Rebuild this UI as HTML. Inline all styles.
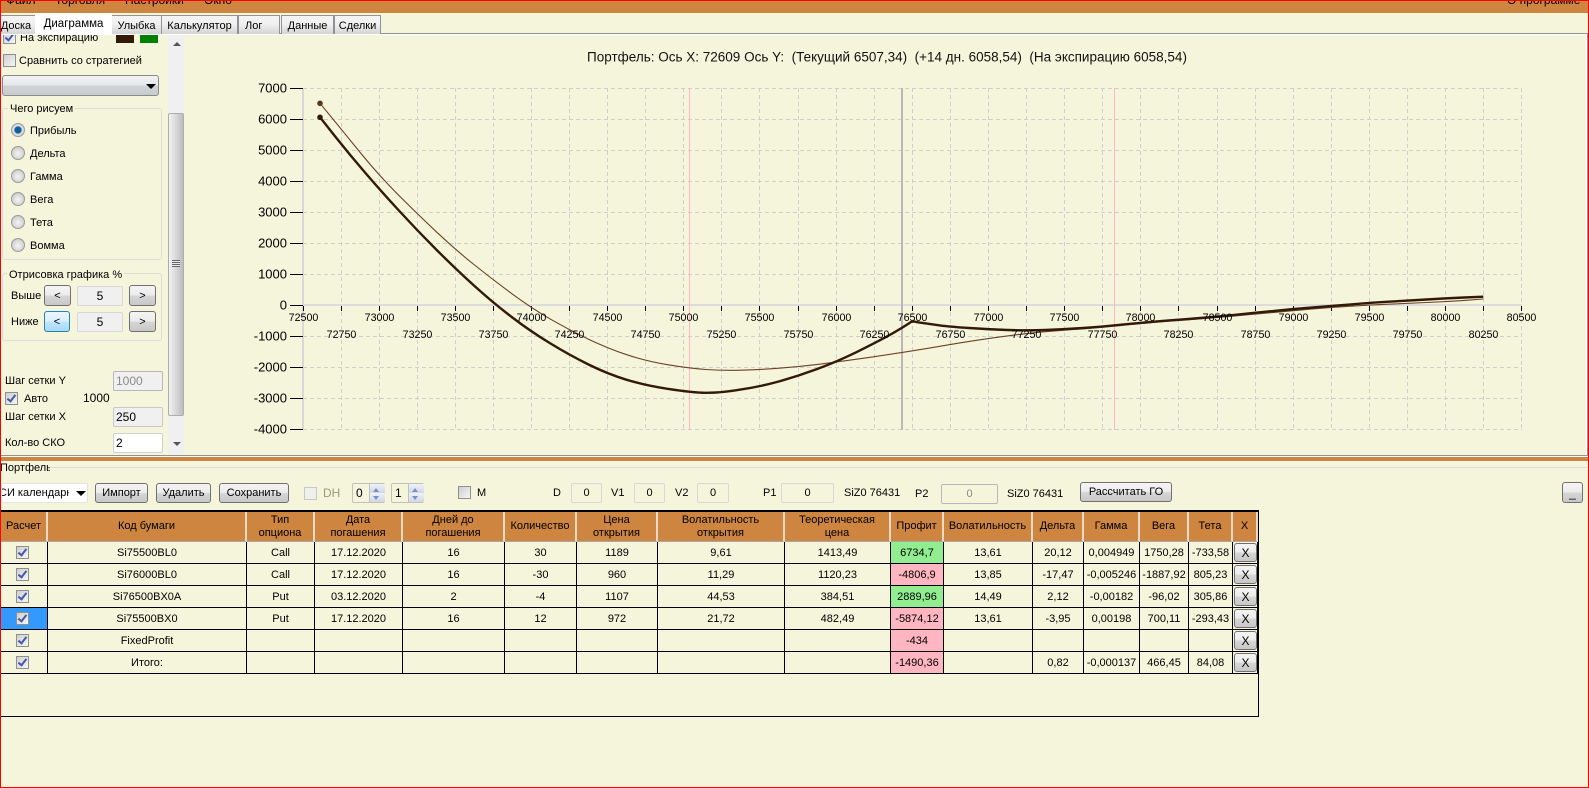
<!DOCTYPE html>
<html lang="ru"><head><meta charset="utf-8"><title>Портфель</title>
<style>
html,body{margin:0;padding:0;width:1589px;height:788px;overflow:hidden;background:#F5F5DC}
body{position:relative;font:11px/14px "Liberation Sans",sans-serif;color:#000}
.a{position:absolute;white-space:nowrap;line-height:14px}
.red{position:absolute;background:#f00;z-index:50}
.tab{position:absolute;top:15px;height:18px;border:1px solid #8f9296;border-bottom:0;box-sizing:content-box;background:linear-gradient(#f4f4f4,#f0f0f0 45%,#d4d4d4);text-align:center;line-height:20px;font-size:11px;overflow:hidden}
.cb{position:absolute;width:11px;height:11px;border:1px solid #8e8f8f;background:linear-gradient(135deg,#cfcfcf,#f6f6f6)}
.cb.on::after{content:"";position:absolute;left:3px;top:0;width:3px;height:7px;border:solid #4359ab;border-width:0 2px 2px 0;transform:rotate(38deg)}
.rd{position:absolute;left:10px;width:12px;height:12px;border:1px solid #9a9a9a;border-radius:50%;background:radial-gradient(circle at 50% 55%,#f4f4f4,#d8d8d8 55%,#b8b8b8)}
.rd.on{background:radial-gradient(circle,#0a5f9e 0,#14609a 36%,#dfe3e6 50%,#c4c4c4 100%)}
.btn{position:absolute;box-sizing:border-box;border:1px solid #707070;border-radius:3px;background:linear-gradient(#f4f4f4,#ececec 48%,#d6d6d6 52%,#c8c8c8);text-align:center;font-size:11px}
.in{position:absolute;box-sizing:border-box;border:1px solid #d6d8da;border-radius:2px;background:#f0f0f0;text-align:center;font-size:12px}
.grp{position:absolute;box-sizing:border-box;border:1px solid #dcdcdc;border-radius:3px}
.lg{position:absolute;background:#F5F5DC;padding:0 2px;white-space:nowrap;line-height:14px;font-size:11px}
#tw{position:absolute;left:1px;top:510px;width:1258px;height:207px;box-sizing:border-box;border-top:2px solid #000;border-bottom:1px solid #000;border-right:1px solid #000;overflow:hidden}
table{border-collapse:separate;border-spacing:0;table-layout:fixed;width:1257px;position:absolute;left:0;top:0;font-size:11px}
th{height:30px;box-sizing:border-box;padding:0;background:#CD853F;font-weight:normal;line-height:13px;border-right:2px solid #ead9c5;border-bottom:1px solid #a9a9a9;overflow:hidden;white-space:pre-line}
td{height:22px;box-sizing:border-box;padding:0;text-align:center;border-right:1px solid #000;border-bottom:1px solid #000;position:relative;overflow:hidden;white-space:nowrap}
td .cb{left:15px;top:4px}
.g{background:#90EE90}.p{background:#FFB6C1}.s{background:#3399ff}
td .x{position:absolute;left:1px;top:1px;width:23px;height:19px;box-sizing:border-box;border:1px solid #707070;border-radius:3px;background:linear-gradient(#f4f4f4,#ececec 48%,#d6d6d6 52%,#c8c8c8);line-height:18px;font-size:12px}
svg{position:absolute;left:0;top:0}
</style></head><body>
<div class="red" style="left:0;top:0;width:1589px;height:1px"></div>
<div class="red" style="left:0;top:787px;width:1589px;height:1px"></div>
<div class="red" style="left:0;top:0;width:1px;height:788px"></div>
<div class="red" style="left:1588px;top:0;width:1px;height:788px"></div>

<div style="position:absolute;left:0;top:1px;width:1589px;height:12px;background:#CD853F;overflow:hidden;font-size:12px">
<span class="a" style="left:6px;top:-8px">Файл</span>
<span class="a" style="left:55px;top:-8px">Торговля</span>
<span class="a" style="left:125px;top:-8px">Настройки</span>
<span class="a" style="left:204px;top:-8px">Окно</span>
<span class="a" style="left:1507px;top:-8px">О программе</span>
</div>

<!-- tab strip -->
<div style="position:absolute;left:1px;top:33px;width:1586px;height:1px;background:#8f9296"></div>
<div style="position:absolute;left:1px;top:34px;width:1586px;height:1px;background:#fff"></div>
<div style="position:absolute;left:1586px;top:34px;width:1px;height:421px;background:#fff"></div>
<div style="position:absolute;left:1587px;top:33px;width:1px;height:423px;background:#8f9296"></div>
<div class="tab" style="left:-3px;width:37px;text-indent:-1px">Доска</div>
<div class="tab" style="left:35px;top:13px;width:75px;height:21px;background:#fff;border-color:#fff;line-height:20px;z-index:2;font-size:11.5px">Диаграмма</div>
<div class="tab" style="left:111px;width:49px">Улыбка</div>
<div class="tab" style="left:161px;width:75px">Калькулятор</div>
<div class="tab" style="left:238px;width:40px;text-align:left;text-indent:6px">Лог</div>
<div class="tab" style="left:281px;width:51px">Данные</div>
<div class="tab" style="left:334px;width:45px">Сделки</div>

<!-- left panel -->
<div style="position:absolute;left:1px;top:35px;width:166px;height:419px;overflow:hidden">
<div class="cb on" style="left:2px;top:-4px"></div>
<span class="a" style="left:19px;top:-4px">На экспирацию</span>
<div style="position:absolute;left:115px;top:0;width:18px;height:8px;background:#331a06"></div>
<div style="position:absolute;left:139px;top:0;width:18px;height:8px;background:#008000"></div>
<div class="cb" style="left:2px;top:19px"></div>
<span class="a" style="left:18px;top:19px">Сравнить со стратегией</span>
<div class="btn" style="left:1px;top:40px;width:157px;height:21px;background:linear-gradient(#f2f2f2,#e6e8ea 48%,#d0d4d6 52%,#c8ccce);border-color:#8a8a8a"></div>
<div style="position:absolute;left:145px;top:49px;border:5px solid transparent;border-top:5px solid #000;border-bottom:0"></div>
<div class="grp" style="left:1px;top:73px;width:160px;height:152px"></div>
<span class="lg" style="left:7px;top:67px">Чего рисуем</span>
<div class="rd on" style="top:88px"></div><span class="a" style="left:29px;top:89px">Прибыль</span>
<div class="rd" style="top:111px"></div><span class="a" style="left:29px;top:112px">Дельта</span>
<div class="rd" style="top:134px"></div><span class="a" style="left:29px;top:135px">Гамма</span>
<div class="rd" style="top:157px"></div><span class="a" style="left:29px;top:158px">Вега</span>
<div class="rd" style="top:180px"></div><span class="a" style="left:29px;top:181px">Тета</span>
<div class="rd" style="top:203px"></div><span class="a" style="left:29px;top:204px">Вомма</span>
<div class="grp" style="left:1px;top:238px;width:160px;height:68px"></div>
<span class="lg" style="left:6px;top:233px">Отрисовка графика %</span>
<span class="a" style="left:10px;top:254px">Выше</span>
<div class="btn" style="left:43px;top:250px;width:27px;height:21px;line-height:20px">&lt;</div>
<div class="in" style="left:76px;top:251px;width:46px;height:20px;line-height:18px">5</div>
<div class="btn" style="left:128px;top:250px;width:27px;height:21px;line-height:20px">&gt;</div>
<span class="a" style="left:10px;top:280px">Ниже</span>
<div class="btn" style="left:43px;top:276px;width:26px;height:21px;line-height:20px;border-color:#2c7fb8;background:linear-gradient(#eaf6fd,#d9f0fc 48%,#bee6fd 52%,#a7d9f5)">&lt;</div>
<div class="in" style="left:76px;top:277px;width:46px;height:20px;line-height:18px">5</div>
<div class="btn" style="left:128px;top:276px;width:27px;height:21px;line-height:20px">&gt;</div>
<span class="a" style="left:4px;top:339px">Шаг сетки Y</span>
<div class="in" style="left:112px;top:336px;width:50px;height:20px;line-height:18px;text-align:left;padding-left:2px;color:#8a8a8a;border-color:#b8b8b8">1000</div>
<div class="cb on" style="left:4px;top:357px"></div>
<span class="a" style="left:23px;top:357px">Авто</span>
<span class="a" style="left:82px;top:356px;font-size:12px">1000</span>
<span class="a" style="left:4px;top:375px">Шаг сетки X</span>
<div class="in" style="left:112px;top:372px;width:50px;height:20px;line-height:18px;text-align:left;padding-left:2px;border-color:#c8c8c8">250</div>
<span class="a" style="left:4px;top:401px">Кол-во СКО</span>
<div class="in" style="left:112px;top:398px;width:50px;height:20px;line-height:18px;text-align:left;padding-left:2px;background:#fff;border-color:#d0d0d0">2</div>
</div>

<!-- scrollbar -->
<div style="position:absolute;left:168px;top:35px;width:16px;height:419px;background:#f0f0f0"></div>
<div style="position:absolute;left:173px;top:42px;border:4px solid transparent;border-bottom:4px solid #555;border-top:0"></div>
<div style="position:absolute;left:173px;top:442px;border:4px solid transparent;border-top:4px solid #555;border-bottom:0"></div>
<div style="position:absolute;left:168px;top:113px;width:16px;height:303px;box-sizing:border-box;border:1px solid #adadad;border-radius:2px;background:linear-gradient(90deg,#f2f2f2,#d8d8d8 50%,#bcbcbc)"></div>
<div style="position:absolute;left:172px;top:260px;width:8px;height:7px;background:repeating-linear-gradient(#666 0,#666 1px,#e8e8e8 1px,#e8e8e8 2px)"></div>

<!-- chart -->
<svg width="1589" height="460" viewBox="0 0 1589 460" font-family="'Liberation Sans',sans-serif">
<text x="887" y="61.5" font-size="13.5" text-anchor="middle" xml:space="preserve" fill="#111">Портфель: Ось X: 72609 Ось Y:  (Текущий 6507,34)  (+14 дн. 6058,54)  (На экспирацию 6058,54)</text>
<path stroke="#cfcfcf" stroke-width="1" stroke-dasharray="4 3" fill="none" d="M303 88.5H1522M303 119.5H1522M303 150.5H1522M303 181.5H1522M303 212.5H1522M303 243.5H1522M303 274.5H1522M303 336.5H1522M303 367.5H1522M303 398.5H1522M303 429.5H1522
M341.5 88V430M379.5 88V430M417.5 88V430M455.5 88V430M493.5 88V430M531.5 88V430M569.5 88V430M607.5 88V430M645.5 88V430M683.5 88V430M721.5 88V430M759.5 88V430M798.5 88V430M836.5 88V430M874.5 88V430M912.5 88V430M950.5 88V430M988.5 88V430M1026.5 88V430M1064.5 88V430M1102.5 88V430M1140.5 88V430M1178.5 88V430M1217.5 88V430M1255.5 88V430M1293.5 88V430M1331.5 88V430M1369.5 88V430M1407.5 88V430M1445.5 88V430M1483.5 88V430M1521.5 88V430"/>
<rect x="302" y="88" width="2" height="342" fill="#d8d8d8"/>
<rect x="303" y="304" width="1219" height="2" fill="#dcdcdc"/>
<rect x="901" y="88" width="2" height="342" fill="#b8b8b8"/>
<rect x="689" y="88" width="1" height="342" fill="#ffb6c1"/>
<rect x="1114" y="88" width="1" height="342" fill="#ffb6c1"/>
<path stroke="#000" stroke-width="1" fill="none" d="M290 88.5H303M290 119.5H303M290 150.5H303M290 181.5H303M290 212.5H303M290 243.5H303M290 274.5H303M290 305.5H303M290 336.5H303M290 367.5H303M290 398.5H303M290 429.5H303
M303.5 306V311M341.5 306V311M379.5 306V311M417.5 306V311M455.5 306V311M493.5 306V311M531.5 306V311M569.5 306V311M607.5 306V311M645.5 306V311M683.5 306V311M721.5 306V311M759.5 306V311M798.5 306V311M836.5 306V311M874.5 306V311M912.5 306V311M950.5 306V311M988.5 306V311M1026.5 306V311M1064.5 306V311M1102.5 306V311M1140.5 306V311M1178.5 306V311M1217.5 306V311M1255.5 306V311M1293.5 306V311M1331.5 306V311M1369.5 306V311M1407.5 306V311M1445.5 306V311M1483.5 306V311M1521.5 306V311"/>
<path fill="none" stroke="#6b4226" stroke-width="1.1" stroke-linejoin="round" d="M320 103.3L341.3 129.3L360.6 153Q380 176.7 398.4 195Q416.7 213.3 436.2 231.7Q455.7 250 474.5 265Q493.3 280 512.5 294.2Q531.7 308.3 550.5 319.2Q569.3 330 588.5 339.2Q607.7 348.3 626.7 354.7Q645.7 361 667.5 364.7Q689.3 368.3 705.8 369.5Q722.3 370.7 741.2 370.2Q760 369.7 779.2 368.2Q798.3 366.7 817.5 364.4Q836.7 362 869.2 357.4Q901.7 352.7 939.2 346.4Q976.7 340 1001.7 336.7Q1026.7 333.3 1045.4 331.7Q1064 330 1083.4 328.8Q1102.7 327.5 1121.4 325.5Q1140 323.5 1179 320.5Q1218 317.5 1236.5 315.8Q1255 314 1274.2 312.4Q1293.3 310.7 1312.5 309Q1331.7 307.3 1350.9 306.2Q1370 305 1388.7 304.2Q1407.3 303.3 1426.5 302.5Q1445.7 301.7 1464.5 300.4L1483.3 299"/>
<path fill="none" stroke="#331a08" stroke-width="2.4" stroke-linejoin="round" d="M320 117.3L335 136.2Q350 155 365 172.5Q380 190 398.4 210Q416.7 230 436.2 249.5Q455.7 269 474.5 286Q493.3 303 511.7 317Q530 331 549.7 343Q569.3 355 588.5 364.5Q607.7 374 626.7 379.8Q645.7 385.5 667.5 388.8C680 390.7 694 392.8 706 392.8C720 392.8 731 391.2 741.2 389.4Q760 386.7 779.2 381.4Q798.3 376 817.5 368.9Q836.7 361.7 855.9 352.4Q875 343 888.4 335.7Q901.7 328.3 911 322L914 321.5L918 322.3Q930 324 940 325.4Q950 326.7 969 328Q988 329.3 1007.4 330Q1026.7 330.7 1045.4 330Q1064 329.3 1083.4 328Q1102.7 326.7 1121.4 324.7Q1140 322.7 1179 319.7Q1218 316.7 1236.5 314.7Q1255 312.7 1274.2 310.9Q1293.3 309 1312.5 307.5Q1331.7 306 1350.9 304.4Q1370 302.7 1388.7 301.7Q1407.3 300.7 1426.5 299.5Q1445.7 298.3 1464.5 297.5L1483.3 296.7"/>
<circle cx="320" cy="103.3" r="2.8" fill="#5f3518"/>
<circle cx="320" cy="117.3" r="2.8" fill="#331a08"/>
<g font-size="13" text-anchor="end" fill="#000">
<text x="287" y="92.5">7000</text><text x="287" y="123.5">6000</text><text x="287" y="154.5">5000</text><text x="287" y="185.5">4000</text><text x="287" y="216.5">3000</text><text x="287" y="247.5">2000</text><text x="287" y="278.5">1000</text><text x="287" y="309.5">0</text><text x="287" y="340.5">-1000</text><text x="287" y="371.5">-2000</text><text x="287" y="402.5">-3000</text><text x="287" y="433.5">-4000</text>
</g>
<g font-size="10.7" text-anchor="middle" fill="#000">
<text x="303.5" y="321">72500</text><text x="379.5" y="321">73000</text><text x="455.5" y="321">73500</text><text x="531.5" y="321">74000</text><text x="607.5" y="321">74500</text><text x="683.5" y="321">75000</text><text x="759.5" y="321">75500</text><text x="836.5" y="321">76000</text><text x="912.5" y="321">76500</text><text x="988.5" y="321">77000</text><text x="1064.5" y="321">77500</text><text x="1140.5" y="321">78000</text><text x="1217.5" y="321">78500</text><text x="1293.5" y="321">79000</text><text x="1369.5" y="321">79500</text><text x="1445.5" y="321">80000</text><text x="1521.5" y="321">80500</text>
<text x="341.5" y="338">72750</text><text x="417.5" y="338">73250</text><text x="493.5" y="338">73750</text><text x="569.5" y="338">74250</text><text x="645.5" y="338">74750</text><text x="721.5" y="338">75250</text><text x="798.5" y="338">75750</text><text x="874.5" y="338">76250</text><text x="950.5" y="338">76750</text><text x="1026.5" y="338">77250</text><text x="1102.5" y="338">77750</text><text x="1178.5" y="338">78250</text><text x="1255.5" y="338">78750</text><text x="1331.5" y="338">79250</text><text x="1407.5" y="338">79750</text><text x="1483.5" y="338">80250</text>
</g>
</svg>

<!-- splitter -->
<div style="position:absolute;left:1px;top:455px;width:1587px;height:1px;background:#8f9296"></div>
<div style="position:absolute;left:1px;top:456px;width:1587px;height:1px;background:#fff"></div>
<div style="position:absolute;left:1px;top:457px;width:1587px;height:4px;background:#CD853F"></div>

<!-- portfolio toolbar -->
<div style="position:absolute;left:50px;top:467px;width:1537px;height:1px;background:#dcdcdc"></div>
<span class="a" style="left:0;top:461px;width:50px;overflow:hidden">Портфель</span>
<div style="position:absolute;left:1px;top:483px;width:87px;height:20px;background:#fff;border:1px solid #e4e4e4;box-sizing:border-box;border-radius:2px;overflow:hidden"><span class="a" style="left:-3px;top:2px;width:70px;overflow:hidden">СИ календарная</span></div>
<div style="position:absolute;left:76px;top:491px;border:5px solid transparent;border-top:5px solid #000;border-bottom:0"></div>
<div class="btn" style="left:95px;top:483px;width:53px;height:20px;line-height:18px">Импорт</div>
<div class="btn" style="left:156px;top:483px;width:55px;height:20px;line-height:18px">Удалить</div>
<div class="btn" style="left:219px;top:483px;width:70px;height:20px;line-height:18px">Сохранить</div>
<div class="cb" style="left:304px;top:487px;background:#f0f0ea;border-color:#c8c8c8"></div>
<span class="a" style="left:323px;top:486px;color:#9a9a78;font-size:12px">DH</span>
<div class="in" style="left:352px;top:483px;width:33px;height:20px;text-align:left;padding-left:3px;line-height:18px;background:#F5F5DC;border-color:#c0c0c0">0</div>
<div style="position:absolute;left:369px;top:484px;width:15px;height:18px;background:linear-gradient(#eef2f8,#cfd8e6 50%,#eef2f8 50%,#cfd8e6);border-left:1px solid #c0c0c0"></div>
<div style="position:absolute;left:373px;top:488px;border:3px solid transparent;border-bottom:4px solid #7c8fc0;border-top:0"></div>
<div style="position:absolute;left:373px;top:496px;border:3px solid transparent;border-top:4px solid #7c8fc0;border-bottom:0"></div>
<div class="in" style="left:391px;top:483px;width:33px;height:20px;text-align:left;padding-left:3px;line-height:18px;background:#F5F5DC;border-color:#c0c0c0">1</div>
<div style="position:absolute;left:408px;top:484px;width:15px;height:18px;background:linear-gradient(#eef2f8,#cfd8e6 50%,#eef2f8 50%,#cfd8e6);border-left:1px solid #c0c0c0"></div>
<div style="position:absolute;left:412px;top:488px;border:3px solid transparent;border-bottom:4px solid #7c8fc0;border-top:0"></div>
<div style="position:absolute;left:412px;top:496px;border:3px solid transparent;border-top:4px solid #7c8fc0;border-bottom:0"></div>
<div class="cb" style="left:458px;top:486px"></div>
<span class="a" style="left:477px;top:486px">M</span>
<span class="a" style="left:553px;top:486px">D</span>
<div class="in" style="left:571px;top:483px;width:31px;height:20px;line-height:18px;background:#F5F5DC;font-size:11px">0</div>
<span class="a" style="left:611px;top:486px">V1</span>
<div class="in" style="left:634px;top:483px;width:31px;height:20px;line-height:18px;background:#F5F5DC;font-size:11px">0</div>
<span class="a" style="left:675px;top:486px">V2</span>
<div class="in" style="left:697px;top:483px;width:32px;height:20px;line-height:18px;background:#F5F5DC;font-size:11px">0</div>
<span class="a" style="left:763px;top:486px">P1</span>
<div class="in" style="left:781px;top:483px;width:53px;height:20px;line-height:18px;background:#F5F5DC;font-size:11px">0</div>
<span class="a" style="left:844px;top:486px">SiZ0 76431</span>
<span class="a" style="left:915px;top:487px">P2</span>
<div class="in" style="left:941px;top:484px;width:57px;height:20px;line-height:18px;background:#F5F5DC;color:#8a8a8a;border-color:#b8b8b8;font-size:11px">0</div>
<span class="a" style="left:1007px;top:487px">SiZ0 76431</span>
<div class="btn" style="left:1080px;top:482px;width:92px;height:20px;line-height:18px">Рассчитать ГО</div>
<div class="btn" style="left:1562px;top:482px;width:21px;height:21px;line-height:20px;font-size:12px">_</div>

<!-- table -->
<div id="tw"><table>
<colgroup><col style="width:47px"><col style="width:199px"><col style="width:68px"><col style="width:88px"><col style="width:102px"><col style="width:72px"><col style="width:81px"><col style="width:127px"><col style="width:106px"><col style="width:53px"><col style="width:89px"><col style="width:51px"><col style="width:56px"><col style="width:49px"><col style="width:44px"><col style="width:25px"></colgroup>
<tr><th>Расчет</th><th>Код бумаги</th><th>Тип
опциона</th><th>Дата
погашения</th><th>Дней до
погашения</th><th>Количество</th><th>Цена
открытия</th><th>Волатильность
открытия</th><th>Теоретическая
цена</th><th>Профит</th><th>Волатильность</th><th>Дельта</th><th>Гамма</th><th>Вега</th><th>Тета</th><th>X</th></tr>
<tr><td><div class="cb on"></div></td><td>Si75500BL0</td><td>Call</td><td>17.12.2020</td><td>16</td><td>30</td><td>1189</td><td>9,61</td><td>1413,49</td><td class="g">6734,7</td><td>13,61</td><td>20,12</td><td>0,004949</td><td>1750,28</td><td>-733,58</td><td><div class="x">X</div></td></tr>
<tr><td><div class="cb on"></div></td><td>Si76000BL0</td><td>Call</td><td>17.12.2020</td><td>16</td><td>-30</td><td>960</td><td>11,29</td><td>1120,23</td><td class="p">-4806,9</td><td>13,85</td><td>-17,47</td><td>-0,005246</td><td>-1887,92</td><td>805,23</td><td><div class="x">X</div></td></tr>
<tr><td><div class="cb on"></div></td><td>Si76500BX0A</td><td>Put</td><td>03.12.2020</td><td>2</td><td>-4</td><td>1107</td><td>44,53</td><td>384,51</td><td class="g">2889,96</td><td>14,49</td><td>2,12</td><td>-0,00182</td><td>-96,02</td><td>305,86</td><td><div class="x">X</div></td></tr>
<tr><td class="s"><div class="cb on"></div></td><td>Si75500BX0</td><td>Put</td><td>17.12.2020</td><td>16</td><td>12</td><td>972</td><td>21,72</td><td>482,49</td><td class="p">-5874,12</td><td>13,61</td><td>-3,95</td><td>0,00198</td><td>700,11</td><td>-293,43</td><td><div class="x">X</div></td></tr>
<tr><td><div class="cb on"></div></td><td>FixedProfit</td><td></td><td></td><td></td><td></td><td></td><td></td><td></td><td class="p">-434</td><td></td><td></td><td></td><td></td><td></td><td><div class="x">X</div></td></tr>
<tr><td><div class="cb on"></div></td><td>Итого:</td><td></td><td></td><td></td><td></td><td></td><td></td><td></td><td class="p">-1490,36</td><td></td><td>0,82</td><td>-0,000137</td><td>466,45</td><td>84,08</td><td><div class="x">X</div></td></tr>
</table></div>
</body></html>
